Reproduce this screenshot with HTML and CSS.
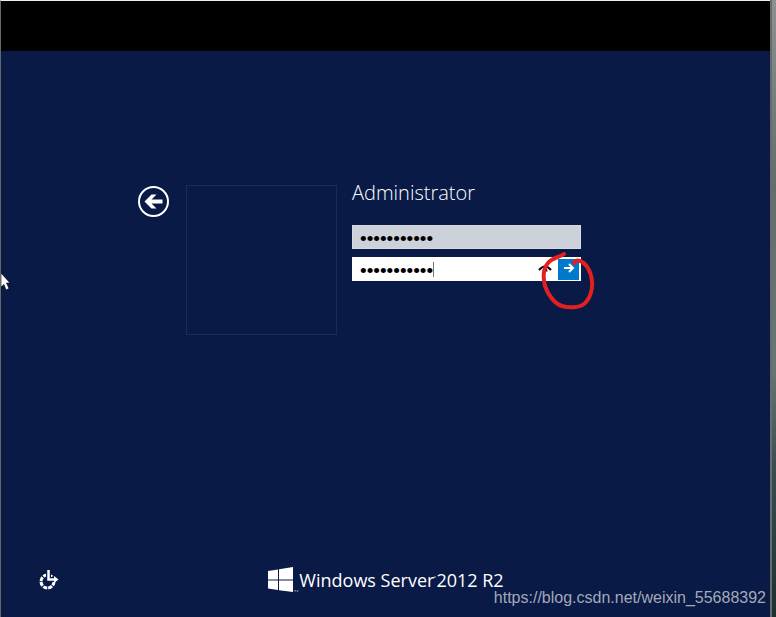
FILE: index.html
```html
<!DOCTYPE html>
<html lang="en">
  <head>
    <meta charset="UTF-8" />
    <meta name="viewport" content="width=device-width, initial-scale=1.0" />
    <title>Windows Server 2012 R2</title>
    <link rel="stylesheet" href="styles.css">
  </head>
  <body>
    <div class="screen">
      <div class="top-bar"></div>

      <main class="login">
        <button type="button" class="back-button" aria-label="Back">
          <svg width="32" height="32" viewBox="0 0 32 32">
            <circle cx="15.500" cy="16.500" r="14.500" fill="none" stroke="#fff" stroke-width="2" />
            <path d="M6.500 16.500L13.500 9.500H18.500L13.500 14.500H24.500V18.500H13.500L18.500 23.500H13.500Z" fill="#fff" />
          </svg>
        </button>
        <div class="avatar"></div>

        <form class="login-form">
          <h1>Administrator</h1>
          <input type="password" class="password" value="abcdefghijk" aria-label="New password" />
          <div class="confirm">
            <input type="password" class="password" value="abcdefghijk" aria-label="Confirm password" />
            <span class="caret"></span>
            <button type="button" class="reveal-button" aria-label="Show password">
              <svg width="14" height="10" viewBox="0 0 14 10">
                <path d="M1 6Q7-1 13 6" fill="none" stroke="#000" stroke-width="2" />
                <path d="M4.500 7.500Q4.500 4 7 4T9.500 7.500Z" fill="#000" />
              </svg>
            </button>
            <button type="submit" class="submit-button" aria-label="Submit">
              <svg width="12" height="12" viewBox="0 0 12 12">
                <path d="M1 5H10M6 1L10 5L6 9" fill="none" stroke="#fff" stroke-width="2" />
              </svg>
            </button>
            <svg class="marker" width="56" height="62" viewBox="0 0 56 62">
              <path d="M25 3C21 6 13 7 9 12C4 18 4 27 6 35C9 44 16 53 23 55C29 57 40 57 45 53C51 48 54 38 53 30C52 20 47 12 41 10C38 9 36 10 35 12" />
            </svg>
          </div>
        </form>
      </main>

      <footer class="footer">
        <button type="button" class="ease-button" aria-label="Ease of access">
          <svg width="20" height="20" viewBox="0 0 20 20">
            <circle cx="8.500" cy="11.500" r="6.500" fill="none" stroke="#fff" stroke-width="3" stroke-dasharray="4.100 1" />
            <path d="M9.500 0V9.500H15" fill="none" stroke="#091a46" stroke-width="5" />
            <path d="M9.500 0V9.500H16" fill="none" stroke="#fff" stroke-width="2.500" />
            <path d="M15 6L19.500 9.500L15 13Z" fill="#fff" />
          </svg>
        </button>
        <div class="brand">
          <svg width="32" height="26" viewBox="0 0 32 26">
            <path d="M1 4L11 2.500V12.500H1ZM12 2.300L26 0V12.500H12ZM1 13.500H11V23L1 21.500ZM12 13.500H26V25L12 23.200Z" fill="#fff" />
            <path d="M27 23.500H29M28 23.500V25M30 25V23.500H31V25" fill="none" stroke="#8c94aa" stroke-width="0.700" />
          </svg>
          <span>Windows Server</span>
          <span class="registered"></span>
          <span>2012 R2</span>
        </div>
      </footer>

      <svg class="pointer" width="11" height="18" viewBox="0 0 11 18">
        <path d="M0 0L9 10H5.500L8 15.500L5 17L3 11.500L0 14Z" fill="#fff" stroke="#000" stroke-width="0.600" />
      </svg>
      <a class="watermark" href="https://blog.csdn.net/weixin_55688392">https://blog.csdn.net/weixin_55688392</a>
    </div>
    <div class="desktop-edge"></div>
  </body>
</html>
```
FILE: styles.css
```css
body {
  font-family: "Open Sans", "Noto Sans", sans-serif;
  color: white;
  display: flex;
  min-height: 100vh;
  margin: 0;
}

.screen {
  position: relative;
  flex: 1;
  display: flex;
  flex-direction: column;
  box-sizing: border-box;
  border-left: 1px solid #66686a;
  border-top: 1px solid #edf0ee;
  background-color: #091a46;
}

.top-bar {
  height: 50px;
  background-color: black;
}

.desktop-edge {
  width: 4px;
  border-left: 2px solid #696b68;
  background: linear-gradient(#8b9293, #626d6e 30%, #687576 60%, #3c4e55 75%, #1c3034);
}

button {
  display: flex;
  align-items: center;
  justify-content: center;
  padding: 0;
  border: none;
  background: none;
  cursor: pointer;
}

.login {
  flex: 1;
  display: flex;
  justify-content: center;
  align-items: flex-start;
  padding: 134px 52px 0 0;
}

.back-button {
  margin-right: 16px;
}

.avatar {
  width: 149px;
  height: 148px;
  margin-right: 15px;
  border: 1px solid #1b2b57;
}

.login-form {
  width: 229px;
}

h1 {
  margin: 0 0 24px;
  font-size: 20px;
  font-weight: 300;
  line-height: 16px;
}

.password {
  display: block;
  width: 100%;
  height: 24px;
  box-sizing: border-box;
  padding: 3px 7px 0;
  border: 1px solid #d8dae0;
  background-color: #cdd1da;
  color: black;
  font-family: "Liberation Sans", Arial, sans-serif;
  font-size: 19px;
  outline: none;
}

.confirm {
  position: relative;
  display: flex;
  align-items: center;
  margin-top: 8px;
  padding-right: 2px;
  box-sizing: border-box;
  background-color: white;
}

.confirm .password {
  flex: 1;
  min-width: 0;
  border-color: white;
  background-color: white;
}

.caret {
  position: absolute;
  left: 81px;
  top: 5px;
  width: 1px;
  height: 15px;
  background-color: #777;
}

.reveal-button {
  width: 26px;
  height: 20px;
}

.submit-button {
  width: 21px;
  height: 21px;
  background-color: #0078cc;
}

.marker {
  position: absolute;
  top: -6px;
  right: -14px;
  fill: none;
  stroke: #e32020;
  stroke-width: 4px;
  stroke-linecap: round;
  stroke-linejoin: round;
  pointer-events: none;
}

.footer {
  display: grid;
  grid-template-columns: 1fr auto 1fr;
  align-items: center;
  padding: 0 38px 22px;
}

.ease-button {
  justify-self: start;
}

.brand {
  display: flex;
  align-items: center;
  font-size: 18px;
  line-height: 30px;
}

.registered {
  width: 2px;
  height: 2px;
  margin-bottom: 6px;
  border-radius: 50%;
  background-color: #8c94aa;
}

.pointer {
  position: absolute;
  left: 0;
  top: 272px;
}

.watermark {
  position: absolute;
  right: 4px;
  bottom: 10px;
  color: #a3a9b8;
  font-family: "Liberation Sans", Arial, sans-serif;
  font-size: 16px;
  line-height: 18px;
  text-decoration: none;
}
```
